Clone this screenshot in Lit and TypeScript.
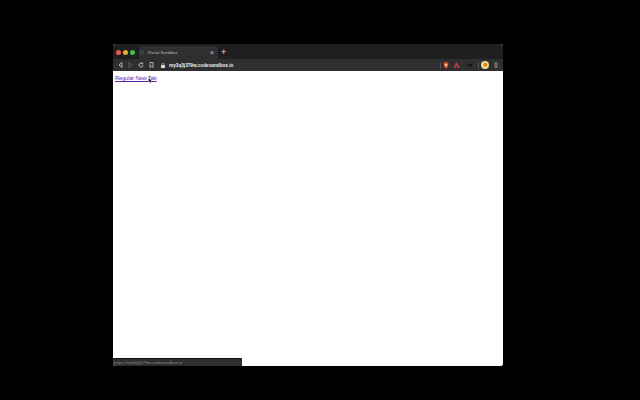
import { LitElement, html, css } from "lit";
import { customElement } from "lit/decorators.js";

@customElement("app-root")
export class AppRoot extends LitElement {
  static styles = css`
    :host { display: block; width: 640px; height: 400px; background: #000; overflow: hidden; font-family: "Liberation Sans", Arial, sans-serif; }
    .page { box-sizing: border-box; height: 400px; padding: 44px 137px 34px 113px; }
    .win { height: 322px; display: flex; flex-direction: column; border-radius: 3px; overflow: hidden; position: relative; background: #fff; }
    .titlebar { height: 15px; background: #1f1f21; display: flex; align-items: flex-end; flex: none; }
    .lights { display: flex; gap: 2px; padding: 0 0 4px 3px; width: 23px; flex: none; }
    .lights i { width: 5px; height: 5px; border-radius: 50%; display: block; }
    .red { background: #e8584f; } .yellow { background: #e5ad2c; } .green { background: #3fc03f; }
    .tab { box-sizing: border-box; width: 79px; height: 13px; background: #2f2f31; border-radius: 3px 3px 0 0; display: flex; align-items: center; padding: 0 4px 0 0; color: #bdbdbd; font-size: 4.3px; }
    .tab .fav { width: 5px; height: 5px; border-radius: 50%; background: #3f3f41; margin: 0 4px 0 0; flex: none; }
    .tab .name { flex: 1; white-space: nowrap; }
    .tab .x { font-size: 7px; color: #c4c4c4; line-height: 1; }
    .plus { color: #e0e0e0; font-size: 9px; line-height: 13px; margin-left: 3px; }
    .toolbar { height: 12px; background: #2f2f31; display: flex; align-items: center; flex: none; padding: 0 5px; }
    .nav { display: flex; align-items: center; gap: 5px; }
    .nav svg, .right svg { display: block; }
    .url { flex: 1; display: flex; align-items: center; gap: 4px; color: #eee; font-size: 4.7px; font-weight: bold; margin-left: 7px; white-space: nowrap; }
    .right { display: flex; align-items: center; }
    .sep { width: 1px; height: 7px; background: #555; }
    .shield { margin-left: 2px; }
    .triangle { margin-left: 4px; }
    .arrow { margin-left: 6px; }
    .sep-gap { margin-left: 5px; }
    .avatar { margin-left: 2px; }
    .menu { margin-left: 5px; }
    .content { flex: 1; background: #fff; padding: 3px 2px; position: relative; }
    a { color: #6a1fb0; font-size: 5.8px; letter-spacing: -0.18px; text-decoration: underline; text-decoration-thickness: 0.5px; line-height: 9px; display: block; width: max-content; }
    .cursor { position: absolute; left: 35px; top: 6px; }
    .status { position: absolute; left: 0; bottom: 0; width: 129px; height: 8px; background: #2e2e30; border-top: 1px solid #111; box-sizing: border-box; color: #8a8a8a; font-size: 4.3px; line-height: 7px; padding-left: 1px; border-top-right-radius: 1px; white-space: nowrap; }
  `;

  render() {
    return html`
      <div class="page">
        <div class="win">
          <div class="titlebar">
            <div class="lights"><i class="red"></i><i class="yellow"></i><i class="green"></i></div>
            <div class="tab">
              <span class="fav"></span>
              <span class="name">Portal Sandbox</span>
              <span class="x">×</span>
            </div>
            <span class="plus">+</span>
          </div>
          <div class="toolbar">
            <div class="nav">
              <svg width="5" height="6" viewBox="0 0 5 6"><path d="M4 .5 1 3l3 2.5z" fill="none" stroke="#ccc" stroke-width=".8"/></svg>
              <svg width="5" height="6" viewBox="0 0 5 6"><path d="M1 .5 4 3 1 5.500z" fill="none" stroke="#666" stroke-width=".8"/></svg>
              <svg width="6" height="6" viewBox="0 0 6 6"><path d="M5 3a2 2 0 1 1-.6-1.400M4.600.6v1.300H3.300" fill="none" stroke="#ddd" stroke-width=".8"/></svg>
              <svg width="5" height="6" viewBox="0 0 5 6"><path d="M1 .5h3v5L2.500 4.300 1 5.500z" fill="none" stroke="#ccc" stroke-width=".8"/></svg>
            </div>
            <div class="url">
              <svg width="4" height="5" viewBox="0 0 4 5"><rect y="2" width="4" height="3" rx=".4" fill="#ddd"/><path d="M1 2V1.200a1 1 0 0 1 2 0V2" fill="none" stroke="#ddd" stroke-width=".6"/></svg>
              <span>my3q3j379w.codesandbox.io</span>
            </div>
            <div class="right">
              <div class="sep"></div>
              <svg class="shield" width="6" height="7" viewBox="0 0 6 7"><path d="M.5 1 2 .3h2L5.500 1 5 4.500 3 6.700 1 4.500z" fill="#e8542a"/><path d="M2 2h2L3 4.500z" fill="#fff"/></svg>
              <svg class="triangle" width="7" height="6" viewBox="0 0 7 6"><path d="M3.500.3 6.800 5.700H.2z" fill="#d8392f"/><path d="M3.500 3 5 5.700H2z" fill="#3a2a6a"/></svg>
              <svg class="arrow" width="7" height="6" viewBox="0 0 7 6"><path d="M.5 5.500C1 3 2.500 2.200 4 2.200V.8L6.700 3 4 5V3.700c-1.500 0-2.500.5-3.500 1.800z" fill="#111"/></svg>
              <div class="sep sep-gap"></div>
              <svg class="avatar" width="8" height="8" viewBox="0 0 8 8"><circle cx="4" cy="4" r="4" fill="#e9dc8c"/><circle cx="4.300" cy="3.700" r="2" fill="#e8792a"/></svg>
              <svg class="menu" width="4" height="6" viewBox="0 0 4 6"><path d="M.5 1h3M.5 3h3M.5 5h3" stroke="#bbb" stroke-width=".9"/></svg>
            </div>
          </div>
          <div class="content">
            <a href="#">Regular New Tab</a>
            <svg class="cursor" width="4" height="7" viewBox="0 0 4 7"><path d="M.5.5v5l1.200-1 .8 1.800.8-.3-.8-1.700H4z" fill="#111" stroke="#fff" stroke-width=".3"/></svg>
          </div>
          <div class="status">https://my3q3j379w.codesandbox.io</div>
        </div>
      </div>
    `;
  }
}
